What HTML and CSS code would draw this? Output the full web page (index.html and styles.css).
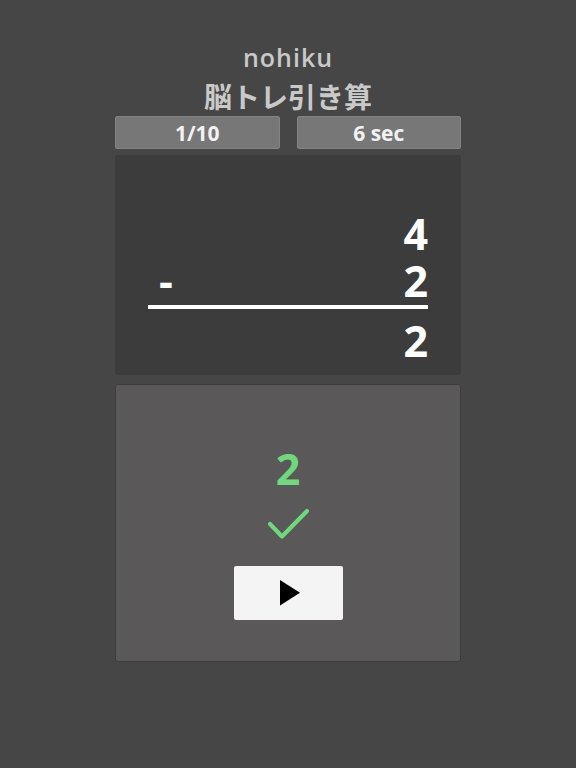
FILE: index.html
```html
<!DOCTYPE html>
<html lang="ja">
<head>
<meta charset="utf-8">
<title>nohiku</title>
<link rel="stylesheet" href="styles.css">
</head>
<body>
<main class="app">
  <header class="head">
    <div class="app-name">nohiku</div>
    <h1 class="app-title">脳トレ引き算</h1>
  </header>

  <div class="stats">
    <div class="stat">1/10</div>
    <div class="stat">6 sec</div>
  </div>

  <section class="problem">
    <div class="row"><span class="op"></span><span class="num">4</span></div>
    <div class="row"><span class="op">-</span><span class="num">2</span></div>
    <div class="rule"></div>
    <div class="row"><span class="op"></span><span class="num">2</span></div>
  </section>

  <section class="answer">
    <div class="answer-value">2</div>
    <svg class="check" width="44" height="36" viewBox="0 0 44 36" aria-hidden="true">
      <polyline points="4,18 16,30.5 41,5" fill="none" stroke="#6fd87c" stroke-width="4.2" stroke-linecap="round" stroke-linejoin="round"/>
    </svg>
    <button class="next" type="button" aria-label="next">
      <svg width="20" height="26" viewBox="0 0 20 26" aria-hidden="true">
        <polygon points="0,0 20,12.7 0,25.4" fill="#000"/>
      </svg>
    </button>
  </section>
</main>
</body>
</html>
```

FILE: styles.css
```css
html, body {
  margin: 0;
  padding: 0;
  background: #464646;
}

body {
  font-family: "Open Sans", "Noto Sans CJK JP", sans-serif;
  color: #fff;
  width: 576px;
  height: 768px;
  overflow: hidden;
}

.app {
  width: 346px;
  margin: 0 auto;
  padding-top: 42px;
  display: flex;
  flex-direction: column;
}

.head {
  display: flex;
  flex-direction: column;
  align-items: center;
  color: #c9c9c9;
}

.app-name {
  font-size: 25px;
  font-weight: 600;
  line-height: 30px;
  letter-spacing: 1px;
}

.app-title {
  margin: 7px 0 0;
  font-family: "Noto Sans CJK JP", sans-serif;
  font-size: 28px;
  font-weight: 700;
  line-height: 34px;
  letter-spacing: 0;
}

.stats {
  margin-top: 3px;
  display: grid;
  grid-template-columns: 1fr 1fr;
  gap: 17px;
}

.stat {
  height: 33px;
  box-sizing: border-box;
  background: #777;
  border: 1px solid #838383;
  border-radius: 2px;
  display: flex;
  align-items: center;
  justify-content: center;
  font-size: 21px;
  font-weight: 700;
  color: #f2f2f2;
}

.problem {
  margin-top: 6px;
  height: 220px;
  box-sizing: border-box;
  background: #3c3c3c;
  border-radius: 3px;
  padding: 55px 33px 0;
  display: flex;
  flex-direction: column;
}

.row {
  display: flex;
  justify-content: space-between;
  font-size: 43px;
  font-weight: 700;
  line-height: 47px;
}

.op {
  margin-left: 11px;
}

.rule {
  height: 4px;
  background: #fff;
  margin: 1px 0 8px;
}

.answer {
  margin-top: 9px;
  height: 278px;
  box-sizing: border-box;
  background: #5a5858;
  border: 1px solid #3d3d3d;
  border-radius: 3px;
  padding-top: 60px;
  display: flex;
  flex-direction: column;
  align-items: center;
}

.answer-value {
  font-size: 43px;
  font-weight: 700;
  line-height: 47px;
  color: #6fd87c;
}

.check {
  display: block;
  margin-top: 14px;
}

.next {
  margin-top: 24px;
  width: 109px;
  height: 54px;
  border: none;
  border-radius: 2px;
  background: #f4f4f4;
  display: flex;
  align-items: center;
  justify-content: center;
  padding: 0 0 0 4px;
  cursor: pointer;
}

.next svg {
  display: block;
}
```
